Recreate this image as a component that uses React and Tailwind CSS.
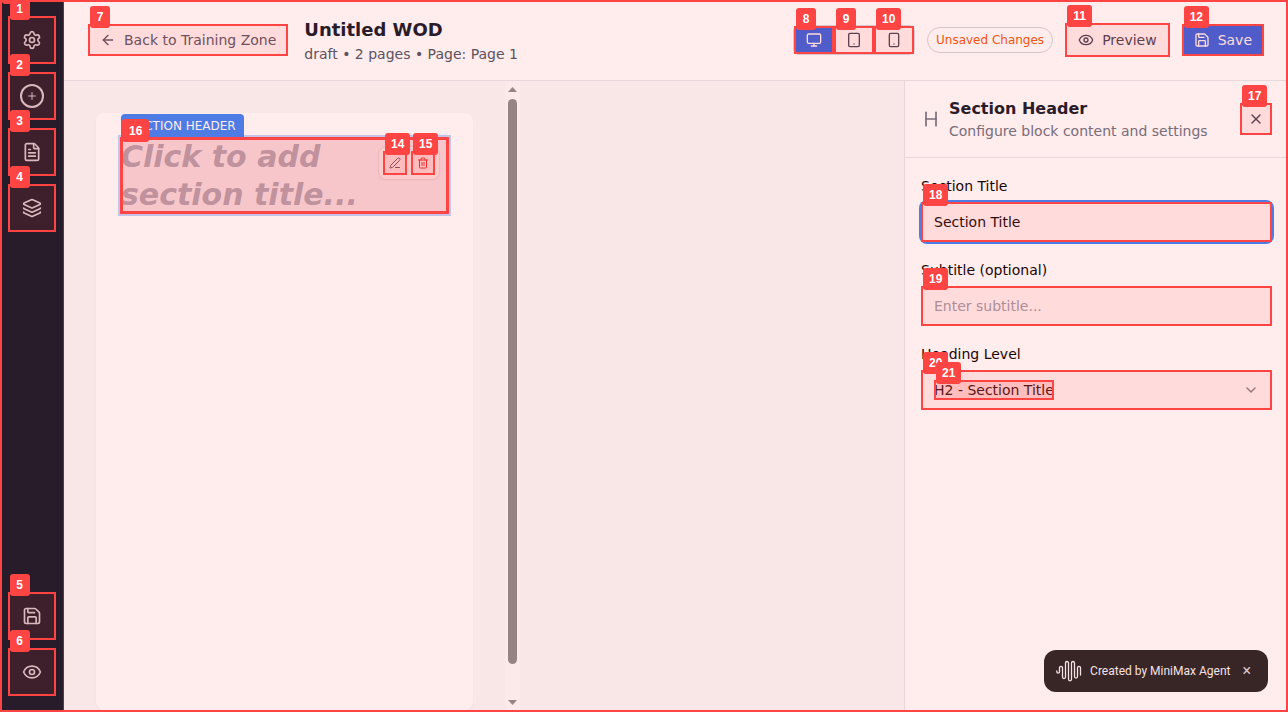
import React from "react";
import {
  Settings, Plus, FileText, Layers, Save, Eye, ArrowLeft, Monitor, Tablet,
  Smartphone, PenLine, Trash2, X, Heading, ChevronDown,
} from "lucide-react";

function Tag({ n }) {
  return (
    <span className="absolute -top-4.5 left-0.5 flex h-5.5 min-w-5 items-center justify-center rounded-[3px] bg-[#ff4444] px-1.5 font-['Liberation_Sans',sans-serif] text-xs font-bold text-white not-italic">
      {n}
    </span>
  );
}

function Mark({ n }) {
  return (
    <span className="pointer-events-none absolute inset-0 z-20 bg-[#ff4444]/10 outline-2 -outline-offset-2 outline-[#ff4444]">
      <Tag n={n} />
    </span>
  );
}

function RailButton({ n, label, children }) {
  return (
    <button type="button" aria-label={label} className="relative flex size-12 items-center justify-center text-gray-300">
      {children}
      <Mark n={n} />
    </button>
  );
}

function Rail() {
  return (
    <nav className="flex w-16 shrink-0 flex-col items-center justify-between border-r border-gray-700 bg-[#111827] py-4">
      <div className="flex flex-col gap-2">
        <RailButton n={1} label="Settings"><Settings size={20} /></RailButton>
        <RailButton n={2} label="Add block">
          <span className="flex size-6 items-center justify-center rounded-full border-2 border-gray-300">
            <Plus size={12} />
          </span>
        </RailButton>
        <RailButton n={3} label="Pages"><FileText size={20} /></RailButton>
        <RailButton n={4} label="Layers"><Layers size={20} /></RailButton>
      </div>
      <div className="flex flex-col gap-2">
        <RailButton n={5} label="Save"><Save size={20} /></RailButton>
        <RailButton n={6} label="Preview"><Eye size={20} /></RailButton>
      </div>
    </nav>
  );
}

function Header() {
  return (
    <header className="flex shrink-0 items-center justify-between border-b border-gray-200 bg-white px-6 py-4">
      <div className="flex items-center gap-4">
        <button type="button" className="relative flex h-8 items-center gap-2 px-3 text-gray-600">
          <ArrowLeft size={16} />
          Back to Training Zone
          <Mark n={7} />
        </button>
        <div>
          <h1 className="text-lg leading-7 font-semibold text-gray-900">Untitled WOD</h1>
          <p className="text-gray-600">draft • 2 pages • Page: Page 1</p>
        </div>
      </div>
      <div className="flex items-center gap-3">
        <div className="flex rounded-md border border-gray-300">
          <button type="button" aria-label="Desktop" className="relative flex h-7 w-10 items-center justify-center bg-[#2563eb] text-white">
            <Monitor size={16} /><Mark n={8} />
          </button>
          <button type="button" aria-label="Tablet" className="relative flex h-7 w-10 items-center justify-center text-gray-700">
            <Tablet size={16} /><Mark n={9} />
          </button>
          <button type="button" aria-label="Mobile" className="relative flex h-7 w-10 items-center justify-center text-gray-700">
            <Smartphone size={16} /><Mark n={10} />
          </button>
        </div>
        <span className="rounded-full border border-gray-300 px-2 py-1 text-xs text-[#ea580c]">Unsaved Changes</span>
        <button type="button" className="relative flex items-center gap-2 border border-gray-300 px-3 py-1.5 text-gray-700">
          <Eye size={16} />
          Preview
          <span className="absolute -inset-px"><Mark n={11} /></span>
        </button>
        <button type="button" className="relative flex items-center gap-2 bg-[#2563eb] px-3 py-1.5 text-white">
          <Save size={16} />
          Save
          <Mark n={12} />
        </button>
      </div>
    </header>
  );
}

function Block() {
  return (
    <section className="relative border border-transparent bg-[#f5f9ff] ring-2 ring-[#bfd3fb]">
      <div className="absolute -top-6 left-0 rounded-t bg-[#3b82f6] px-2 py-1 text-xs text-white">SECTION HEADER</div>
      <h2 className="text-3xl leading-tight font-bold text-[#a7b0c0] italic">Click to add section title...</h2>
      <span className="pointer-events-none absolute -inset-px z-20 border-3 border-[#ff4444] bg-[#ff4444]/20 bg-clip-padding">
        <span className="absolute -top-[21px] -left-px flex h-[23px] items-center rounded-[3px] bg-[#ff4444] px-[7px] font-['Liberation_Sans',sans-serif] text-xs font-bold text-white">16</span>
      </span>
      <div className="absolute top-2 right-2 flex gap-1 rounded-lg border border-gray-200 bg-white p-1 shadow-[0_1px_2px_rgba(0,0,0,0.05)]">
        <button type="button" aria-label="Edit block" className="relative flex size-6 items-center justify-center text-gray-600">
          <PenLine size={12} /><Mark n={14} />
        </button>
        <button type="button" aria-label="Delete block" className="relative flex size-6 items-center justify-center text-[#dc2626]">
          <Trash2 size={12} /><Mark n={15} />
        </button>
      </div>
    </section>
  );
}

function Canvas() {
  return (
    <main className="flex min-w-0 flex-1 bg-[#f9fafb]">
      <div className="flex w-[456px]">
        <div className="flex-1 px-8 pt-8 pb-0.5">
          <div className="h-full rounded-lg bg-white p-6 shadow-[0_1px_2px_rgba(0,0,0,0.05)]">
            <Block />
          </div>
        </div>
        <div className="flex w-[15px] flex-col items-center bg-[#fcfcfc] pt-1.5 pb-[7px]">
          <svg width="9" height="5" className="shrink-0" aria-hidden="true"><path d="M0 5 4.5 0 9 5z" fill="#8b8b8b" /></svg>
          <div className="flex w-full flex-1 justify-center pt-[7px] pb-9">
            <div className="w-[9px] rounded-full bg-[#8b8b8b]" />
          </div>
          <svg width="9" height="5" className="shrink-0" aria-hidden="true"><path d="M0 0h9L4.5 5z" fill="#8b8b8b" /></svg>
        </div>
      </div>
    </main>
  );
}

function Field({ id, label, children }) {
  return (
    <div className="flex flex-col gap-1">
      <label htmlFor={id} className="leading-6 text-black">{label}</label>
      {children}
    </div>
  );
}

function Panel() {
  return (
    <aside className="flex w-96 shrink-0 flex-col border-l border-gray-200 bg-white">
      <div className="flex items-center justify-between border-b border-gray-200 p-4">
        <div className="flex items-center gap-2">
          <Heading size={20} className="text-gray-500" />
          <div>
            <h2 className="text-base leading-6 font-semibold text-gray-900">Section Header</h2>
            <p className="text-gray-500">Configure block content and settings</p>
          </div>
        </div>
        <button type="button" aria-label="Close panel" className="relative flex size-8 items-center justify-center text-gray-700">
          <X size={16} />
          <Mark n={17} />
        </button>
      </div>
      <form className="flex flex-col gap-4 p-4">
        <Field id="title" label="Section Title">
          <div className="relative rounded-md ring-2 ring-[#3b82f6]">
            <input id="title" type="text" defaultValue="Section Title" className="h-10 w-full rounded-md border border-gray-200 px-3 text-black outline-none" />
            <Mark n={18} />
          </div>
        </Field>
        <Field id="subtitle" label="Subtitle (optional)">
          <div className="relative">
            <input id="subtitle" type="text" placeholder="Enter subtitle..." className="h-10 w-full rounded-md border border-gray-200 px-3 outline-none placeholder:text-gray-400" />
            <Mark n={19} />
          </div>
        </Field>
        <Field id="level" label="Heading Level">
          <div className="relative">
            <select id="level" defaultValue="h2" className="h-10 w-full appearance-none rounded-md border border-gray-200 px-3 text-black outline-none">
              <option value="h1">H1 - Page Title</option>
              <option value="h2">H2 - Section Title</option>
              <option value="h3">H3 - Subsection</option>
            </select>
            <ChevronDown size={16} className="pointer-events-none absolute top-3 right-[13px] text-black opacity-50" />
            <Mark n={20} />
            <span className="pointer-events-none absolute top-2.5 left-[13px] h-5 w-[120px] bg-[#ff4444]/10"><Mark n={21} /></span>
          </div>
        </Field>
      </form>
    </aside>
  );
}

function Toast() {
  return (
    <div className="absolute right-5 bottom-5 flex h-[42px] items-center rounded-xl bg-[#222222] pr-[17px] pl-3 font-['Roboto',sans-serif] text-xs text-gray-100">
      <svg width="26" height="22" viewBox="0 0 26 22" fill="none" stroke="currentColor" strokeWidth="1.3" strokeLinecap="round" aria-hidden="true" className="mr-2">
        <path d="M.8 11v.8a1.350 1.350 0 0 0 2.700 0V7.800a1.500 1.500 0 0 1 3 0V17a1.500 1.500 0 0 0 3 0V3a1.500 1.500 0 0 1 3 0V19.300a1.500 1.500 0 0 0 3 0V3a1.500 1.500 0 0 1 3 0V16.500a1.500 1.500 0 0 0 3 0V7.800a1.500 1.500 0 0 1 3 0V15" />
      </svg>
      Created by MiniMax Agent
      <button type="button" aria-label="Dismiss" className="ml-3 text-base leading-4 text-gray-300">×</button>
    </div>
  );
}

export default function App() {
  return (
    <div className="relative flex h-screen overflow-hidden bg-white font-['DejaVu_Sans',sans-serif] text-sm">
      <Rail />
      <div className="flex min-w-0 flex-1 flex-col">
        <Header />
        <div className="flex min-h-0 flex-1">
          <Canvas />
          <Panel />
        </div>
      </div>
      <Toast />
      <div className="pointer-events-none absolute inset-0 z-10 bg-[#ff4444]/10 outline-2 -outline-offset-2 outline-[#ff4444]">
        <Tag />
      </div>
    </div>
  );
}
